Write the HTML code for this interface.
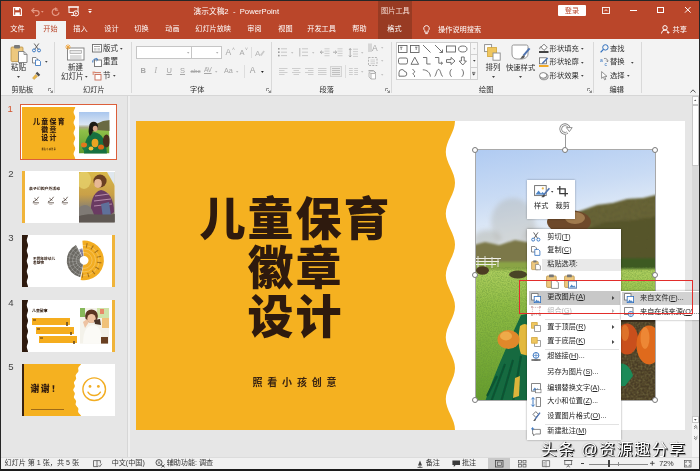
<!DOCTYPE html>
<html lang="zh-CN">
<head>
<meta charset="utf-8">
<title>PowerPoint</title>
<style>
*{box-sizing:border-box;margin:0;padding:0}
html,body{width:700px;height:471px;overflow:hidden;background:#e6e6e6}
body{position:relative;font-family:"Liberation Sans","Noto Sans CJK SC",sans-serif;font-size:8px;color:#262626}
#app{position:absolute;left:0;top:0;width:700px;height:471px;overflow:hidden;will-change:transform}
.abs{position:absolute}
svg{display:block;overflow:visible}
.t{position:absolute;white-space:nowrap}
#frame{position:absolute;left:0;top:0;width:700px;height:471px;border:1px solid #262626;border-bottom:2px solid #1c1c1c;pointer-events:none}
</style>
</head>
<body>
<div id="app">
<div class="abs" style="left:0px;top:0px;width:700px;height:39px;background:#ba462a;"></div>
<div class="abs" style="left:377.5px;top:1px;width:34.5px;height:38px;background:#983b23;"></div>
<svg class="abs" style="left:12.5px;top:6.8px;" width="9" height="9" viewBox="0 0 9 9"><path d="M0.6 0.6H6.8L8.4 2.2V8.4H0.6Z" fill="none" stroke="#fff" stroke-width="1.1"/><rect x="2.2" y="0.6" width="4" height="2.6" fill="#fff"/><rect x="2.2" y="5.4" width="4.6" height="3" fill="#fff"/></svg>
<svg class="abs" style="left:30.5px;top:6.8px;" width="9" height="9" viewBox="0 0 9 9"><path d="M1.2 3.6H5.6A2.5 2.5 0 0 1 5.6 8.6H4" fill="none" stroke="#e49a86" stroke-width="1.2"/><path d="M3.2 1.2L0.8 3.6L3.2 6" fill="none" stroke="#e49a86" stroke-width="1.2"/></svg>
<svg class="abs" style="left:41.2px;top:10.65px;" width="2.6" height="1.8" viewBox="0 0 2.6 1.8"><path d="M0 0H2.6L1.3 1.8Z" fill="#e49a86"/></svg>
<svg class="abs" style="left:51px;top:6.6px;" width="9" height="9.4" viewBox="0 0 9 9.4"><path d="M6.4 2.2A3.4 3.4 0 1 0 8 5.4" fill="none" stroke="#e49a86" stroke-width="1.2"/><path d="M4.6 0.6V3.2H7.2" fill="none" stroke="#e49a86" stroke-width="1.1"/></svg>
<svg class="abs" style="left:67.5px;top:6px;" width="12" height="11" viewBox="0 0 12 11"><path d="M0 1H11" stroke="#fff" stroke-width="1.1"/><rect x="1" y="1" width="9" height="5.4" fill="none" stroke="#fff" stroke-width="1"/><path d="M5.5 6.4V8.6M3.2 9.4H7" stroke="#fff" stroke-width="1"/><circle cx="8" cy="7.4" r="2.6" fill="#ba462a" stroke="#fff" stroke-width="1"/><path d="M7.2 6.2L9.2 7.4L7.2 8.6Z" fill="#fff"/></svg>
<svg class="abs" style="left:87.6px;top:8.6px;" width="4" height="5" viewBox="0 0 4 5"><path d="M0.4 0.5H3.6" stroke="#fff" stroke-width="0.8"/><path d="M0.2 2H3.8L2 4.2Z" fill="#fff"/></svg>
<div class="t" style="left:193.6px;top:6.15px;font-size:7.7px;line-height:11.7px;color:#ffffff;font-weight:400;">演示文稿2&nbsp; -&nbsp; PowerPoint</div>
<div class="t" style="left:381px;top:5.20px;font-size:7.2px;line-height:11.2px;color:#f6ddd5;font-weight:400;">图片工具</div>
<div class="abs" style="left:558.3px;top:5.2px;width:27.5px;height:10.4px;background:#fff;border-radius:1px"></div>
<div class="t" style="left:559px;top:4.70px;font-size:7.2px;line-height:11.2px;color:#ba462a;font-weight:400;width:26px;text-align:center;">登录</div>
<svg class="abs" style="left:602px;top:7px;" width="8" height="7" viewBox="0 0 8 7"><rect x="0.5" y="0.5" width="7" height="6" fill="none" stroke="#fff" stroke-width="0.9"/><path d="M2.5 4.2L4 2.6L5.5 4.2" fill="none" stroke="#fff" stroke-width="0.9"/></svg>
<div class="abs" style="left:630px;top:10px;width:7px;height:1px;background:#fff;"></div>
<div class="abs" style="left:657px;top:7px;width:6.5px;height:6px;background:transparent;border:1px solid #fff"></div>
<svg class="abs" style="left:684.5px;top:7.2px;" width="5.6" height="5.6" viewBox="0 0 5.6 5.6"><path d="M0 0L5.6 5.6M5.6 0L0 5.6" stroke="#fff" stroke-width="1"/></svg>
<div class="abs" style="left:36px;top:21px;width:30px;height:18.5px;background:#f3f3f3;"></div>
<div class="t" style="left:10.3px;top:24.43px;font-size:7.15px;line-height:11.15px;color:#ffffff;font-weight:400;">文件</div>
<div class="t" style="left:73.3px;top:24.43px;font-size:7.15px;line-height:11.15px;color:#ffffff;font-weight:400;">插入</div>
<div class="t" style="left:104.3px;top:24.43px;font-size:7.15px;line-height:11.15px;color:#ffffff;font-weight:400;">设计</div>
<div class="t" style="left:134.3px;top:24.43px;font-size:7.15px;line-height:11.15px;color:#ffffff;font-weight:400;">切换</div>
<div class="t" style="left:165.3px;top:24.43px;font-size:7.15px;line-height:11.15px;color:#ffffff;font-weight:400;">动画</div>
<div class="t" style="left:195.3px;top:24.43px;font-size:7.15px;line-height:11.15px;color:#ffffff;font-weight:400;">幻灯片放映</div>
<div class="t" style="left:247.3px;top:24.43px;font-size:7.15px;line-height:11.15px;color:#ffffff;font-weight:400;">审阅</div>
<div class="t" style="left:278.3px;top:24.43px;font-size:7.15px;line-height:11.15px;color:#ffffff;font-weight:400;">视图</div>
<div class="t" style="left:307.3px;top:24.43px;font-size:7.15px;line-height:11.15px;color:#ffffff;font-weight:400;">开发工具</div>
<div class="t" style="left:352.3px;top:24.43px;font-size:7.15px;line-height:11.15px;color:#ffffff;font-weight:400;">帮助</div>
<div class="t" style="left:387.3px;top:24.43px;font-size:7.15px;line-height:11.15px;color:#ffffff;font-weight:400;">格式</div>
<div class="t" style="left:43.3px;top:24.43px;font-size:7.15px;line-height:11.15px;color:#ba462a;font-weight:400;">开始</div>
<svg class="abs" style="left:422.5px;top:25px;" width="7" height="10" viewBox="0 0 7 10"><path d="M3.5 0.6A2.8 2.8 0 0 1 5.2 5.6V7.2H1.8V5.6A2.8 2.8 0 0 1 3.5 0.6Z" fill="none" stroke="#fff" stroke-width="0.9"/><path d="M2.2 8.6H4.8" stroke="#fff" stroke-width="0.9"/></svg>
<div class="t" style="left:438px;top:24.20px;font-size:7.2px;line-height:11.2px;color:#ffffff;font-weight:400;">操作说明搜索</div>
<svg class="abs" style="left:660.5px;top:25px;" width="9" height="9" viewBox="0 0 9 9"><circle cx="4" cy="2.8" r="2.2" fill="none" stroke="#fff" stroke-width="1"/><path d="M0.5 8.5A3.6 3.6 0 0 1 7 6.5" fill="none" stroke="#fff" stroke-width="1"/><path d="M7.2 6.2V8.8M5.9 7.5H8.5" stroke="#fff" stroke-width="0.8"/></svg>
<div class="t" style="left:672.5px;top:23.90px;font-size:7.2px;line-height:11.2px;color:#ffffff;font-weight:400;">共享</div>
<div class="abs" style="left:0px;top:39px;width:700px;height:56px;background:#f3f3f3;"></div>
<div class="abs" style="left:0px;top:94.5px;width:700px;height:1px;background:#d6d6d6;"></div>
<svg class="abs" style="left:10px;top:43.5px;" width="18" height="19" viewBox="0 0 18 19"><rect x="1" y="3" width="12" height="14.5" rx="1" fill="#edc87e" stroke="#b99247" stroke-width="0.8"/>
<rect x="4" y="1" width="6" height="3.6" rx="1" fill="#7a7a7a"/>
<path d="M8.5 7.5H14L17 10.5V18.5H8.5Z" fill="#fff" stroke="#7c7c7c" stroke-width="0.9"/><path d="M14 7.5V10.5H17" fill="none" stroke="#7c7c7c" stroke-width="0.8"/></svg>
<div class="t" style="left:11px;top:61.85px;font-size:7.5px;line-height:11.5px;color:#2b2b2b;font-weight:400;">粘贴</div>
<svg class="abs" style="left:16.5px;top:75.75px;" width="3" height="2.0" viewBox="0 0 3 2.0"><path d="M0 0H3L1.5 2.0Z" fill="#444"/></svg>
<svg class="abs" style="left:32px;top:43px;" width="9" height="9.5" viewBox="0 0 9 9.5"><path d="M2.2 0.5L6.3 6.4M6.8 0.5L2.7 6.4" stroke="#555" stroke-width="0.9"/><circle cx="2" cy="7.4" r="1.5" fill="none" stroke="#2f6fbd" stroke-width="0.9"/><circle cx="7" cy="7.4" r="1.5" fill="none" stroke="#2f6fbd" stroke-width="0.9"/></svg>
<svg class="abs" style="left:32px;top:57px;" width="9" height="9" viewBox="0 0 9 9"><path d="M0.5 0.5H4L5.5 2V6H0.5Z" fill="#fff" stroke="#6d6d6d" stroke-width="0.8"/><path d="M3.5 3H7L8.5 4.5V8.5H3.5Z" fill="#fff" stroke="#2f6fbd" stroke-width="0.8"/></svg>
<svg class="abs" style="left:44.900000000000006px;top:60.85px;" width="2.6" height="1.8" viewBox="0 0 2.6 1.8"><path d="M0 0H2.6L1.3 1.8Z" fill="#444"/></svg>
<svg class="abs" style="left:32px;top:71px;" width="9" height="9" viewBox="0 0 9 9"><path d="M5.2 0.8L8.2 3.8L6.6 5.4L3.6 2.4Z" fill="#4d4d4d"/><path d="M3.6 3.4L5.6 5.4L2 8.6L0.5 7.1Z" fill="#e8b54a" stroke="#c09030" stroke-width="0.4"/></svg>
<div class="t" style="left:11.5px;top:83.60px;font-size:7.2px;line-height:11.2px;color:#2b2b2b;font-weight:400;">剪贴板</div>
<svg class="abs" style="left:48px;top:88px;" width="5" height="5" viewBox="0 0 5 5"><path d="M0.5 0.5H3M0.5 0.5V3" stroke="#777" stroke-width="0.8" fill="none"/><path d="M2 2L4.5 4.5M4.5 2.5V4.5H2.5" stroke="#777" stroke-width="0.8" fill="none"/></svg>
<div class="abs" style="left:54px;top:42px;width:1px;height:51px;background:#d9d9d9;"></div>
<svg class="abs" style="left:65px;top:43.5px;" width="20" height="17" viewBox="0 0 20 17"><rect x="2.5" y="4" width="16.5" height="12" fill="#fff" stroke="#7c7c7c" stroke-width="0.9"/><rect x="5" y="6.5" width="11.5" height="3" fill="#e8e8e8" stroke="#9a9a9a" stroke-width="0.6"/><path d="M5 12H16.5M5 14H16.5" stroke="#9a9a9a" stroke-width="0.7"/>
<path d="M3 0.2V6M0.2 3H5.8M1 1L5 5M5 1L1 5" stroke="#f0a030" stroke-width="0.8"/></svg>
<div class="t" style="left:68px;top:61.85px;font-size:7.5px;line-height:11.5px;color:#2b2b2b;font-weight:400;">新建</div>
<div class="t" style="left:61px;top:70.85px;font-size:7.5px;line-height:11.5px;color:#2b2b2b;font-weight:400;">幻灯片</div>
<svg class="abs" style="left:85.3px;top:76.35px;" width="2.6" height="1.8" viewBox="0 0 2.6 1.8"><path d="M0 0H2.6L1.3 1.8Z" fill="#444"/></svg>
<svg class="abs" style="left:91.5px;top:44px;" width="10" height="8.5" viewBox="0 0 10 8.5"><rect x="0.5" y="0.5" width="9" height="7.5" fill="#fff" stroke="#6d6d6d" stroke-width="0.9"/><path d="M2 2.5H8" stroke="#8a8a8a" stroke-width="0.8"/><rect x="2" y="4" width="2.6" height="2.6" fill="#cfcfcf"/><rect x="5.4" y="4" width="2.6" height="2.6" fill="#cfcfcf"/></svg>
<div class="t" style="left:103px;top:42.65px;font-size:7.5px;line-height:11.5px;color:#2b2b2b;font-weight:400;">版式</div>
<svg class="abs" style="left:120.0px;top:48.15px;" width="2.6" height="1.8" viewBox="0 0 2.6 1.8"><path d="M0 0H2.6L1.3 1.8Z" fill="#444"/></svg>
<svg class="abs" style="left:91.5px;top:57.5px;" width="10" height="9" viewBox="0 0 10 9"><rect x="2.5" y="2" width="7" height="6.5" fill="#fff" stroke="#6d6d6d" stroke-width="0.9"/><path d="M0.8 4.5A3 3 0 0 1 5.5 1.4" fill="none" stroke="#2f6fbd" stroke-width="1"/><path d="M4.2 0.2L6 1.5L4.4 3" fill="none" stroke="#2f6fbd" stroke-width="0.8"/></svg>
<div class="t" style="left:103px;top:56.05px;font-size:7.5px;line-height:11.5px;color:#2b2b2b;font-weight:400;">重置</div>
<svg class="abs" style="left:91.5px;top:71px;" width="10" height="9.5" viewBox="0 0 10 9.5"><path d="M0.5 1.2H3.2M0.5 3H2.2" stroke="#d0532f" stroke-width="0.9"/><rect x="3" y="3.5" width="6" height="5.5" fill="#fff" stroke="#c96a55" stroke-width="0.9"/><path d="M3 1.6H9" stroke="#c96a55" stroke-width="0.9"/></svg>
<div class="t" style="left:103px;top:69.85px;font-size:7.5px;line-height:11.5px;color:#2b2b2b;font-weight:400;">节</div>
<svg class="abs" style="left:112.9px;top:75.35px;" width="2.6" height="1.8" viewBox="0 0 2.6 1.8"><path d="M0 0H2.6L1.3 1.8Z" fill="#444"/></svg>
<div class="t" style="left:83px;top:83.60px;font-size:7.2px;line-height:11.2px;color:#2b2b2b;font-weight:400;">幻灯片</div>
<div class="abs" style="left:131px;top:42px;width:1px;height:51px;background:#d9d9d9;"></div>
<div class="abs" style="left:136px;top:46px;width:56px;height:13px;background:#fff;border:1px solid #c6c6c6"></div>
<div class="abs" style="left:191px;top:46px;width:31px;height:13px;background:#fff;border:1px solid #c6c6c6"></div>
<svg class="abs" style="left:186.8px;top:52.199999999999996px;" width="2.4" height="1.7" viewBox="0 0 2.4 1.7"><path d="M0 0H2.4L1.2 1.7Z" fill="#b0b0b0"/></svg>
<svg class="abs" style="left:216.10000000000002px;top:52.199999999999996px;" width="2.4" height="1.7" viewBox="0 0 2.4 1.7"><path d="M0 0H2.4L1.2 1.7Z" fill="#b0b0b0"/></svg>
<div class="t" style="left:225.5px;top:46.35px;font-size:8.5px;line-height:12.5px;color:#a6a6a6;font-weight:400;">A</div>
<div class="t" style="left:232px;top:45.30px;font-size:5px;line-height:9px;color:#a6a6a6;font-weight:400;">˄</div>
<div class="t" style="left:239.5px;top:47.25px;font-size:7.5px;line-height:11.5px;color:#a6a6a6;font-weight:400;">A</div>
<div class="t" style="left:245px;top:45.30px;font-size:5px;line-height:9px;color:#a6a6a6;font-weight:400;">˅</div>
<div class="abs" style="left:251px;top:47px;width:1px;height:11px;background:#dddddd;"></div>
<svg class="abs" style="left:255px;top:47.5px;" width="10" height="10" viewBox="0 0 10 10"><text x="0" y="7.5" font-size="8" fill="#b5b5b5" font-family="Liberation Sans">A</text><path d="M5 7L8.5 2.5L9.8 3.6L6.5 8Z" fill="#c9c9c9"/></svg>
<div class="t" style="left:140.5px;top:65.25px;font-size:7.5px;line-height:11.5px;color:#a6a6a6;font-weight:700;">B</div>
<div class="t" style="left:154.5px;top:65.25px;font-size:7.5px;line-height:11.5px;color:#a6a6a6;font-weight:400;font-style:italic;font-family:Liberation Serif,serif;">I</div>
<div class="t" style="left:166.5px;top:65.25px;font-size:7.5px;line-height:11.5px;color:#a6a6a6;font-weight:400;text-decoration:underline;">U</div>
<div class="t" style="left:180px;top:65.25px;font-size:7.5px;line-height:11.5px;color:#a6a6a6;font-weight:400;text-decoration:underline;">S</div>
<div class="t" style="left:190.5px;top:66.20px;font-size:6.2px;line-height:10.2px;color:#a6a6a6;font-weight:400;text-decoration:line-through;">abc</div>
<div class="t" style="left:204px;top:65.05px;font-size:6.5px;line-height:10.5px;color:#a6a6a6;font-weight:400;text-decoration:underline;letter-spacing:-0.3px">AV</div>
<svg class="abs" style="left:215.10000000000002px;top:71.2px;" width="2.4" height="1.7" viewBox="0 0 2.4 1.7"><path d="M0 0H2.4L1.2 1.7Z" fill="#b9b9b9"/></svg>
<div class="t" style="left:224px;top:65.40px;font-size:7.2px;line-height:11.2px;color:#a6a6a6;font-weight:400;">Aa</div>
<svg class="abs" style="left:235.60000000000002px;top:71.2px;" width="2.4" height="1.7" viewBox="0 0 2.4 1.7"><path d="M0 0H2.4L1.2 1.7Z" fill="#b9b9b9"/></svg>
<div class="abs" style="left:243.5px;top:65px;width:1px;height:13px;background:#dddddd;"></div>
<div class="t" style="left:249.8px;top:64.35px;font-size:8.5px;line-height:12.5px;color:#9d9d9d;font-weight:400;">A</div>
<svg class="abs" style="left:261.40000000000003px;top:71.1px;" width="2.8" height="1.9" viewBox="0 0 2.8 1.9"><path d="M0 0H2.8L1.4 1.9Z" fill="#222"/></svg>
<div class="t" style="left:190px;top:83.60px;font-size:7.2px;line-height:11.2px;color:#2b2b2b;font-weight:400;">字体</div>
<svg class="abs" style="left:265.5px;top:88px;" width="5" height="5" viewBox="0 0 5 5"><path d="M0.5 0.5H3M0.5 0.5V3" stroke="#777" stroke-width="0.8" fill="none"/><path d="M2 2L4.5 4.5M4.5 2.5V4.5H2.5" stroke="#777" stroke-width="0.8" fill="none"/></svg>
<div class="abs" style="left:270.5px;top:42px;width:1px;height:51px;background:#d9d9d9;"></div>
<svg class="abs" style="left:278px;top:48px;" width="9" height="8.5" viewBox="0 0 9 8.5"><g fill="#9c9c9c"><rect x="0" y="0" width="1.6" height="1.6"/><rect x="0" y="3.4" width="1.6" height="1.6"/><rect x="0" y="6.8" width="1.6" height="1.6"/></g><path d="M3 0.8H9M3 4.2H9M3 7.6H9" stroke="#bdbdbd" stroke-width="0.8"/></svg>
<svg class="abs" style="left:290.8px;top:52.0px;" width="2.4" height="1.7" viewBox="0 0 2.4 1.7"><path d="M0 0H2.4L1.2 1.7Z" fill="#c2c2c2"/></svg>
<svg class="abs" style="left:299px;top:48px;" width="9" height="8.5" viewBox="0 0 9 8.5"><path d="M0.8 0V8.5" stroke="#a9a9a9" stroke-width="0.8"/><path d="M3 0.8H9M3 4.2H9M3 7.6H9" stroke="#bdbdbd" stroke-width="0.8"/></svg>
<svg class="abs" style="left:311.8px;top:52.0px;" width="2.4" height="1.7" viewBox="0 0 2.4 1.7"><path d="M0 0H2.4L1.2 1.7Z" fill="#c2c2c2"/></svg>
<svg class="abs" style="left:320px;top:48px;" width="9.5" height="8.5" viewBox="0 0 9.5 8.5"><path d="M4.5 0.8H9.5M4.5 3.1H9.5M4.5 5.4H9.5M4.5 7.7H9.5" stroke="#c4c4c4" stroke-width="0.8"/><path d="M0 4.2H3.6M2 2.6L0.3 4.2L2 5.8" stroke="#9c9c9c" stroke-width="0.8" fill="none"/></svg>
<svg class="abs" style="left:333px;top:48px;" width="9.5" height="8.5" viewBox="0 0 9.5 8.5"><path d="M4.5 0.8H9.5M4.5 3.1H9.5M4.5 5.4H9.5M4.5 7.7H9.5" stroke="#c4c4c4" stroke-width="0.8"/><path d="M0 4.2H3.6M2 2.6L3.7 4.2L2 5.8" stroke="#9c9c9c" stroke-width="0.8" fill="none"/></svg>
<svg class="abs" style="left:349px;top:47.5px;" width="9" height="9.5" viewBox="0 0 9 9.5"><path d="M1.2 0.5V9M0 2L1.2 0.5L2.4 2M0 7.5L1.2 9L2.4 7.5" stroke="#9c9c9c" stroke-width="0.8" fill="none"/><path d="M4 1.2H9M4 3.6H9M4 6H9M4 8.4H9" stroke="#c4c4c4" stroke-width="0.8"/></svg>
<svg class="abs" style="left:360.8px;top:52.0px;" width="2.4" height="1.7" viewBox="0 0 2.4 1.7"><path d="M0 0H2.4L1.2 1.7Z" fill="#c2c2c2"/></svg>
<svg class="abs" style="left:368px;top:43px;" width="9.5" height="9.5" viewBox="0 0 9.5 9.5"><path d="M1 0.5V9M3 0.5V9" stroke="#a9a9a9" stroke-width="0.8"/><text x="4" y="8" font-size="8.5" fill="#a3a3a3" font-family="Liberation Sans">A</text></svg>
<svg class="abs" style="left:380.8px;top:47.4px;" width="2.4" height="1.7" viewBox="0 0 2.4 1.7"><path d="M0 0H2.4L1.2 1.7Z" fill="#c2c2c2"/></svg>
<svg class="abs" style="left:368px;top:56.5px;" width="9.5" height="9" viewBox="0 0 9.5 9"><rect x="0.5" y="0.5" width="8.5" height="8" fill="none" stroke="#a3a3a3" stroke-width="0.8" stroke-dasharray="2 1.2"/><path d="M2.5 3H7M2.5 4.8H7M2.5 6.6H7" stroke="#c4c4c4" stroke-width="0.7"/></svg>
<svg class="abs" style="left:380.8px;top:60.4px;" width="2.4" height="1.7" viewBox="0 0 2.4 1.7"><path d="M0 0H2.4L1.2 1.7Z" fill="#c2c2c2"/></svg>
<svg class="abs" style="left:368px;top:70px;" width="10" height="9.5" viewBox="0 0 10 9.5"><path d="M0.5 0.8H5.5L8 3.2" fill="none" stroke="#8c8c8c" stroke-width="1"/><path d="M3 3.5H7.5V9H3Z" fill="#fff" stroke="#a3a3a3" stroke-width="0.8"/><path d="M1 2.5L3 3.5M1 2.5V7L3 9" stroke="#a3a3a3" stroke-width="0.7" fill="none"/></svg>
<svg class="abs" style="left:380.8px;top:74.4px;" width="2.4" height="1.7" viewBox="0 0 2.4 1.7"><path d="M0 0H2.4L1.2 1.7Z" fill="#c2c2c2"/></svg>
<svg class="abs" style="left:278.5px;top:67.5px;" width="8.5" height="7" viewBox="0 0 8.5 7"><path d="M0 0.50H8.50" stroke="#c4c4c4" stroke-width="0.8"/><path d="M0 2.50H5.53" stroke="#c4c4c4" stroke-width="0.8"/><path d="M0 4.50H8.50" stroke="#c4c4c4" stroke-width="0.8"/><path d="M0 6.50H5.53" stroke="#c4c4c4" stroke-width="0.8"/></svg>
<svg class="abs" style="left:291.5px;top:67.5px;" width="8.5" height="7" viewBox="0 0 8.5 7"><path d="M0 0.5H8.5M1.5 2.5H7M0 4.5H8.5M1.5 6.5H7" stroke="#c4c4c4" stroke-width="0.8"/></svg>
<svg class="abs" style="left:304.5px;top:67.5px;" width="8.5" height="7" viewBox="0 0 8.5 7"><path d="M0 0.5H8.5M3 2.5H8.5M0 4.5H8.5M3 6.5H8.5" stroke="#c4c4c4" stroke-width="0.8"/></svg>
<svg class="abs" style="left:318px;top:67.5px;" width="8.5" height="7" viewBox="0 0 8.5 7"><path d="M0 0.50H8.50" stroke="#c4c4c4" stroke-width="0.8"/><path d="M0 2.50H8.50" stroke="#c4c4c4" stroke-width="0.8"/><path d="M0 4.50H8.50" stroke="#c4c4c4" stroke-width="0.8"/><path d="M0 6.50H8.50" stroke="#c4c4c4" stroke-width="0.8"/></svg>
<div class="abs" style="left:329.5px;top:66px;width:12px;height:10.5px;background:#ebebeb;border:1px solid #d4d4d4"></div>
<svg class="abs" style="left:331.5px;top:68px;" width="8" height="7" viewBox="0 0 8 7"><path d="M0 0.5H8M0 2.5H8M0 4.5H8M0 6.5H8" stroke="#b5b5b5" stroke-width="0.8"/></svg>
<div class="abs" style="left:344.5px;top:65px;width:1px;height:13px;background:#dddddd;"></div>
<svg class="abs" style="left:349px;top:67.5px;" width="9" height="7" viewBox="0 0 9 7"><path d="M0 0.5H3.8M0 2.5H3.8M0 4.5H3.8M0 6.5H3.8M5.2 0.5H9M5.2 2.5H9M5.2 4.5H9M5.2 6.5H9" stroke="#c4c4c4" stroke-width="0.8"/></svg>
<svg class="abs" style="left:361.2px;top:71.2px;" width="2.4" height="1.7" viewBox="0 0 2.4 1.7"><path d="M0 0H2.4L1.2 1.7Z" fill="#c2c2c2"/></svg>
<div class="t" style="left:319.5px;top:83.60px;font-size:7.2px;line-height:11.2px;color:#2b2b2b;font-weight:400;">段落</div>
<svg class="abs" style="left:384.5px;top:88px;" width="5" height="5" viewBox="0 0 5 5"><path d="M0.5 0.5H3M0.5 0.5V3" stroke="#777" stroke-width="0.8" fill="none"/><path d="M2 2L4.5 4.5M4.5 2.5V4.5H2.5" stroke="#777" stroke-width="0.8" fill="none"/></svg>
<div class="abs" style="left:390.5px;top:42px;width:1px;height:51px;background:#d9d9d9;"></div>
<div class="abs" style="left:396px;top:42px;width:82px;height:38px;background:#fff;border:1px solid #d0d0d0"></div>
<div class="abs" style="left:469.5px;top:42px;width:8.5px;height:38px;background:#f6f6f6;border:1px solid #d0d0d0"></div>
<div class="abs" style="left:469.5px;top:54.3px;width:8.5px;height:1px;background:#d0d0d0;"></div>
<div class="abs" style="left:469.5px;top:66.6px;width:8.5px;height:1px;background:#d0d0d0;"></div>
<svg class="abs" style="left:472.5px;top:47.75px;" width="2.6" height="1.8" viewBox="0 0 2.6 1.8"><path d="M0 0H2.6L1.3 1.8Z" fill="#c6c6c6"/></svg>
<svg class="abs" style="left:472.5px;top:59.95px;" width="2.6" height="1.8" viewBox="0 0 2.6 1.8"><path d="M0 0H2.6L1.3 1.8Z" fill="#444"/></svg>
<svg class="abs" style="left:472.2px;top:71.5px;" width="3.4" height="4" viewBox="0 0 3.4 4"><path d="M0 0.4H3.4" stroke="#444" stroke-width="0.7"/><path d="M0 1.6H3.4L1.7 3.6Z" fill="#444"/></svg>
<svg class="abs" style="left:398px;top:44px;" width="9.5" height="9.5" viewBox="0 0 9.5 9.5"><g fill="none" stroke="#5a5a5a" stroke-width="0.85"><rect x="0.5" y="1.5" width="8.5" height="7"/><path d="M2 3.2H4.5M3.2 3.2V6" stroke-width="0.7"/></g></svg>
<svg class="abs" style="left:410px;top:44px;" width="9.5" height="9.5" viewBox="0 0 9.5 9.5"><g fill="none" stroke="#5a5a5a" stroke-width="0.85"><rect x="0.5" y="1.5" width="8.5" height="7"/><path d="M5 3.2H7.5M6.2 3.2V6" stroke-width="0.7"/></g></svg>
<svg class="abs" style="left:422px;top:44px;" width="9.5" height="9.5" viewBox="0 0 9.5 9.5"><g fill="none" stroke="#5a5a5a" stroke-width="0.85"><path d="M1 1L8.5 8.5"/></g></svg>
<svg class="abs" style="left:434px;top:44px;" width="9.5" height="9.5" viewBox="0 0 9.5 9.5"><g fill="none" stroke="#5a5a5a" stroke-width="0.85"><path d="M1 1L8.5 8.5M8.5 5.5V8.5H5.5"/></g></svg>
<svg class="abs" style="left:446px;top:44px;" width="9.5" height="9.5" viewBox="0 0 9.5 9.5"><g fill="none" stroke="#5a5a5a" stroke-width="0.85"><rect x="0.5" y="2" width="9" height="6"/></g></svg>
<svg class="abs" style="left:458px;top:44px;" width="9.5" height="9.5" viewBox="0 0 9.5 9.5"><g fill="none" stroke="#5a5a5a" stroke-width="0.85"><ellipse cx="4.8" cy="5" rx="4.2" ry="3"/></g></svg>
<svg class="abs" style="left:398px;top:56px;" width="9.5" height="9.5" viewBox="0 0 9.5 9.5"><g fill="none" stroke="#5a5a5a" stroke-width="0.85"><rect x="0.5" y="2" width="9" height="6" rx="1.6"/></g></svg>
<svg class="abs" style="left:410px;top:56px;" width="9.5" height="9.5" viewBox="0 0 9.5 9.5"><g fill="none" stroke="#5a5a5a" stroke-width="0.85"><path d="M4.8 1.2L8.6 8.3H1Z"/></g></svg>
<svg class="abs" style="left:422px;top:56px;" width="9.5" height="9.5" viewBox="0 0 9.5 9.5"><g fill="none" stroke="#5a5a5a" stroke-width="0.85"><path d="M1 1.5H4.8V8H8.6"/></g></svg>
<svg class="abs" style="left:434px;top:56px;" width="9.5" height="9.5" viewBox="0 0 9.5 9.5"><g fill="none" stroke="#5a5a5a" stroke-width="0.85"><path d="M1 1.5H4.8V7.2H8.4M7 5.8L8.5 7.2L7 8.6"/></g></svg>
<svg class="abs" style="left:446px;top:56px;" width="9.5" height="9.5" viewBox="0 0 9.5 9.5"><g fill="none" stroke="#5a5a5a" stroke-width="0.85"><path d="M0.5 3.6H5V1.4L9 5L5 8.6V6.4H0.5Z"/></g></svg>
<svg class="abs" style="left:458px;top:56px;" width="9.5" height="9.5" viewBox="0 0 9.5 9.5"><g fill="none" stroke="#5a5a5a" stroke-width="0.85"><path d="M3.4 1H6.2V5H8.4L4.8 9L1.2 5H3.4Z"/></g></svg>
<svg class="abs" style="left:398px;top:68px;" width="9.5" height="9.5" viewBox="0 0 9.5 9.5"><g fill="none" stroke="#5a5a5a" stroke-width="0.85"><path d="M1 8.2V4.5A3 3 0 0 1 4 1.5A2.6 2.6 0 0 1 6.4 3.4A2.5 2.5 0 0 1 8.8 6A2.3 2.3 0 0 1 6.5 8.2Z"/></g></svg>
<svg class="abs" style="left:410px;top:68px;" width="9.5" height="9.5" viewBox="0 0 9.5 9.5"><g fill="none" stroke="#5a5a5a" stroke-width="0.85"><path d="M3 1C1.6 2.2 5.8 2.6 4.6 4.2C3.6 5.6 2.2 4.6 3.4 6.4C4.2 7.6 5 7.2 4.4 9"/></g></svg>
<svg class="abs" style="left:422px;top:68px;" width="9.5" height="9.5" viewBox="0 0 9.5 9.5"><g fill="none" stroke="#5a5a5a" stroke-width="0.85"><path d="M0.8 1.8C5 1.8 8.2 4.6 8.4 8.6"/></g></svg>
<svg class="abs" style="left:434px;top:68px;" width="9.5" height="9.5" viewBox="0 0 9.5 9.5"><g fill="none" stroke="#5a5a5a" stroke-width="0.85"><path d="M0.6 8.4C2 8.4 2.4 1.4 4.6 1.4C6.8 1.4 6.8 8.4 9 8.4"/></g></svg>
<svg class="abs" style="left:446px;top:68px;" width="9.5" height="9.5" viewBox="0 0 9.5 9.5"><g fill="none" stroke="#5a5a5a" stroke-width="0.85"><path d="M5.6 1.2C3.4 3 3.4 7 5.6 8.8"/></g></svg>
<svg class="abs" style="left:458px;top:68px;" width="9.5" height="9.5" viewBox="0 0 9.5 9.5"><g fill="none" stroke="#5a5a5a" stroke-width="0.85"><path d="M3.8 1.2C6 3 6 7 3.8 8.8"/></g></svg>
<svg class="abs" style="left:484px;top:44px;" width="17" height="17" viewBox="0 0 17 17"><rect x="0.6" y="0.6" width="7" height="7" fill="#fff" stroke="#8a8a8a" stroke-width="0.9"/><rect x="3.6" y="3.6" width="9" height="9" fill="#efc65f" stroke="#d2a63b" stroke-width="0.8"/><rect x="9" y="9" width="7.2" height="7.2" fill="#fff" stroke="#8a8a8a" stroke-width="0.9"/></svg>
<div class="t" style="left:485.6px;top:61.85px;font-size:7.5px;line-height:11.5px;color:#2b2b2b;font-weight:400;">排列</div>
<svg class="abs" style="left:491.5px;top:75.75px;" width="3" height="2.0" viewBox="0 0 3 2.0"><path d="M0 0H3L1.5 2.0Z" fill="#444"/></svg>
<svg class="abs" style="left:511px;top:43.5px;" width="20" height="18" viewBox="0 0 20 18"><path d="M2.5 1H15.5A1.6 1.6 0 0 1 17 2.6V10C17 13.4 13.4 15 10 15H6C3 15 1 13.2 1 10V2.6A1.6 1.6 0 0 1 2.5 1Z" fill="#fff" stroke="#8a8a8a" stroke-width="0.9"/><path d="M18.6 4.4L12.4 11.6" stroke="#4f73b0" stroke-width="2"/><path d="M12.6 11.2C10.6 11.4 10.8 13.6 9 14.4C11.4 15.2 13.6 14 13.8 12.2Z" fill="#5c5c5c"/></svg>
<div class="t" style="left:506px;top:61.95px;font-size:7.3px;line-height:11.3px;color:#2b2b2b;font-weight:400;">快速样式</div>
<svg class="abs" style="left:519.0px;top:75.75px;" width="3" height="2.0" viewBox="0 0 3 2.0"><path d="M0 0H3L1.5 2.0Z" fill="#444"/></svg>
<svg class="abs" style="left:538.5px;top:43px;" width="9.5" height="10" viewBox="0 0 9.5 10"><path d="M2 4.2L5 1.2L8.2 4.4L5 7.4Z" fill="#fff" stroke="#555" stroke-width="0.8"/><path d="M0.8 6.2C0.2 4.6 1.4 3.6 2.4 3.8" fill="none" stroke="#555" stroke-width="0.7"/><rect x="0" y="8" width="9.5" height="2" fill="#444"/></svg>
<div class="t" style="left:549.6px;top:42.55px;font-size:7.3px;line-height:11.3px;color:#2b2b2b;font-weight:400;">形状填充</div>
<svg class="abs" style="left:580.5px;top:48.15px;" width="2.6" height="1.8" viewBox="0 0 2.6 1.8"><path d="M0 0H2.6L1.3 1.8Z" fill="#444"/></svg>
<svg class="abs" style="left:538.5px;top:56.5px;" width="9.5" height="10" viewBox="0 0 9.5 10"><rect x="0.5" y="0.8" width="7" height="6" fill="#fff" stroke="#6a6a6a" stroke-width="0.8"/><path d="M3.2 5.6L8.2 0.6L9.2 1.6L4.4 6.6L2.8 7Z" fill="#4f73b0"/><rect x="0" y="8" width="9.5" height="2" fill="#f0a92a"/></svg>
<div class="t" style="left:549.6px;top:56.15px;font-size:7.3px;line-height:11.3px;color:#2b2b2b;font-weight:400;">形状轮廓</div>
<svg class="abs" style="left:580.5px;top:61.75px;" width="2.6" height="1.8" viewBox="0 0 2.6 1.8"><path d="M0 0H2.6L1.3 1.8Z" fill="#444"/></svg>
<svg class="abs" style="left:538.5px;top:70.5px;" width="9.5" height="9.5" viewBox="0 0 9.5 9.5"><ellipse cx="5" cy="5.6" rx="4.2" ry="3.2" fill="#c9c9c9" stroke="#7a7a7a" stroke-width="0.7"/><ellipse cx="4.2" cy="4.4" rx="3.6" ry="2.8" fill="#fff" stroke="#6a6a6a" stroke-width="0.8"/></svg>
<div class="t" style="left:549.6px;top:69.75px;font-size:7.3px;line-height:11.3px;color:#2b2b2b;font-weight:400;">形状效果</div>
<svg class="abs" style="left:580.5px;top:75.35px;" width="2.6" height="1.8" viewBox="0 0 2.6 1.8"><path d="M0 0H2.6L1.3 1.8Z" fill="#444"/></svg>
<div class="t" style="left:479px;top:83.60px;font-size:7.2px;line-height:11.2px;color:#2b2b2b;font-weight:400;">绘图</div>
<svg class="abs" style="left:586.5px;top:88px;" width="5" height="5" viewBox="0 0 5 5"><path d="M0.5 0.5H3M0.5 0.5V3" stroke="#777" stroke-width="0.8" fill="none"/><path d="M2 2L4.5 4.5M4.5 2.5V4.5H2.5" stroke="#777" stroke-width="0.8" fill="none"/></svg>
<div class="abs" style="left:592.5px;top:42px;width:1px;height:51px;background:#d9d9d9;"></div>
<svg class="abs" style="left:599.5px;top:43.5px;" width="9" height="9" viewBox="0 0 9 9"><circle cx="5.4" cy="3.4" r="2.7" fill="none" stroke="#2f6fbd" stroke-width="1"/><path d="M3.4 5.4L0.6 8.4" stroke="#2f6fbd" stroke-width="1.2"/></svg>
<div class="t" style="left:610px;top:42.55px;font-size:7.3px;line-height:11.3px;color:#2b2b2b;font-weight:400;">查找</div>
<svg class="abs" style="left:599.5px;top:57px;" width="9.5" height="9.5" viewBox="0 0 9.5 9.5"><text x="0" y="4.6" font-size="5" fill="#2f6fbd" font-family="Liberation Sans">a</text><text x="4.4" y="9" font-size="5" fill="#2f6fbd" font-family="Liberation Sans">c</text><path d="M4 1.5C6.5 1 8 2.5 7.4 4.6M6.2 3.6L7.4 4.8L8.6 3.6" fill="none" stroke="#6a6a6a" stroke-width="0.7"/></svg>
<div class="t" style="left:610px;top:56.15px;font-size:7.3px;line-height:11.3px;color:#2b2b2b;font-weight:400;">替换</div>
<svg class="abs" style="left:630.5px;top:61.75px;" width="2.6" height="1.8" viewBox="0 0 2.6 1.8"><path d="M0 0H2.6L1.3 1.8Z" fill="#444"/></svg>
<svg class="abs" style="left:601px;top:70.5px;" width="7" height="9.5" viewBox="0 0 7 9.5"><path d="M0.6 0.6V7.4L2.4 5.8L3.6 8.8L4.8 8.3L3.6 5.4H6Z" fill="#fff" stroke="#6a6a6a" stroke-width="0.7"/></svg>
<div class="t" style="left:610px;top:69.75px;font-size:7.3px;line-height:11.3px;color:#2b2b2b;font-weight:400;">选择</div>
<svg class="abs" style="left:626.7px;top:75.35px;" width="2.6" height="1.8" viewBox="0 0 2.6 1.8"><path d="M0 0H2.6L1.3 1.8Z" fill="#444"/></svg>
<div class="t" style="left:609.5px;top:83.60px;font-size:7.2px;line-height:11.2px;color:#2b2b2b;font-weight:400;">编辑</div>
<div class="abs" style="left:640.5px;top:42px;width:1px;height:51px;background:#d9d9d9;"></div>
<svg class="abs" style="left:689.5px;top:88.5px;" width="6" height="4" viewBox="0 0 6 4"><path d="M0.5 3.5L3 0.8L5.5 3.5" fill="none" stroke="#444" stroke-width="0.9"/></svg>
<div class="abs" style="left:0px;top:95.5px;width:127px;height:362px;background:#e6e6e6;"></div>
<div class="abs" style="left:127px;top:95.5px;width:1px;height:362px;background:#d6d6d6;"></div>
<div class="abs" style="left:128px;top:95.5px;width:1.5px;height:362px;background:#efefef;"></div>
<div class="t" style="left:7.5px;top:102.30px;font-size:9.6px;line-height:13.6px;color:#d2532c;font-weight:400;">1</div>
<div class="t" style="left:8.3px;top:167.00px;font-size:9.6px;line-height:13.6px;color:#444;font-weight:400;">2</div>
<div class="t" style="left:8.3px;top:231.30px;font-size:9.6px;line-height:13.6px;color:#444;font-weight:400;">3</div>
<div class="t" style="left:8.3px;top:295.50px;font-size:9.6px;line-height:13.6px;color:#444;font-weight:400;">4</div>
<div class="t" style="left:8.3px;top:359.80px;font-size:9.6px;line-height:13.6px;color:#444;font-weight:400;">5</div>
<div class="abs" style="left:20.2px;top:104.3px;width:96.6px;height:56px;background:#fff;border:1.6px solid #dc5f3a"></div>
<div class="abs" style="left:22.4px;top:106.5px;width:92.4px;height:52px;background:#fff;"></div>
<svg class="abs" style="left:22.4px;top:106.5px;" width="92.4" height="52" viewBox="0 0 92.4 52"><path d="M0 0L53.20 0.00L53.14 0.65L52.97 1.30L52.71 1.95L52.40 2.60L52.09 3.25L51.83 3.90L51.66 4.55L51.60 5.20L51.66 5.85L51.83 6.50L52.09 7.15L52.40 7.80L52.71 8.45L52.97 9.10L53.14 9.75L53.20 10.40L53.14 11.05L52.97 11.70L52.71 12.35L52.40 13.00L52.09 13.65L51.83 14.30L51.66 14.95L51.60 15.60L51.66 16.25L51.83 16.90L52.09 17.55L52.40 18.20L52.71 18.85L52.97 19.50L53.14 20.15L53.20 20.80L53.14 21.45L52.97 22.10L52.71 22.75L52.40 23.40L52.09 24.05L51.83 24.70L51.66 25.35L51.60 26.00L51.66 26.65L51.83 27.30L52.09 27.95L52.40 28.60L52.71 29.25L52.97 29.90L53.14 30.55L53.20 31.20L53.14 31.85L52.97 32.50L52.71 33.15L52.40 33.80L52.09 34.45L51.83 35.10L51.66 35.75L51.60 36.40L51.66 37.05L51.83 37.70L52.09 38.35L52.40 39.00L52.71 39.65L52.97 40.30L53.14 40.95L53.20 41.60L53.14 42.25L52.97 42.90L52.71 43.55L52.40 44.20L52.09 44.85L51.83 45.50L51.66 46.15L51.60 46.80L51.66 47.45L51.83 48.10L52.09 48.75L52.40 49.40L52.71 50.05L52.97 50.70L53.14 51.35L53.20 52.00L0 52Z" fill="#f5b120"/></svg>
<div class="t" style="left:22.4px;top:117.25px;font-size:6.9px;line-height:10.9px;color:#2e1a0e;font-weight:900;width:53px;text-align:center;letter-spacing:1.4px;text-indent:1.4px;">儿童保育</div>
<div class="t" style="left:22.4px;top:125.30px;font-size:6.9px;line-height:10.9px;color:#2e1a0e;font-weight:900;width:53px;text-align:center;letter-spacing:1.4px;text-indent:1.4px;">徽章</div>
<div class="t" style="left:22.4px;top:133.35px;font-size:6.9px;line-height:10.9px;color:#2e1a0e;font-weight:900;width:53px;text-align:center;letter-spacing:1.4px;text-indent:1.4px;">设计</div>
<div class="t" style="left:22.4px;top:147.20px;font-size:1.8px;line-height:5.8px;color:#2e1a0e;font-weight:700;width:53px;text-align:center;letter-spacing:0.6px;">照看小孩创意</div>
<svg class="abs" style="left:79px;top:112.0px;" width="30.5" height="41.5" viewBox="0 0 30.5 41.5"><defs><linearGradient id="p1" x1="0" y1="0" x2="0" y2="1"><stop offset="0" stop-color="#a9c6ee"/><stop offset="0.3" stop-color="#dbe6f3"/><stop offset="0.37" stop-color="#a9aa84"/><stop offset="0.45" stop-color="#8fc048"/><stop offset="1" stop-color="#5d9a2c"/></linearGradient><clipPath id="c1"><rect width="30.5" height="41.5"/></clipPath><filter id="tb" x="-5%" y="-5%" width="110%" height="110%"><feGaussianBlur stdDeviation="0.55"/></filter></defs>
<g clip-path="url(#c1)"><rect width="30.5" height="41.5" fill="url(#p1)"/><g filter="url(#tb)">
<path d="M17 12L24 9L31 8V19L17 18Z" fill="#6b6a42"/>
<path d="M5 42C5 30 8 22 15 20C23 21 27 28 28 42Z" fill="#157040"/>
<path d="M8 30L3 36L6 40L11 34Z" fill="#1a7a46"/>
<ellipse cx="14.6" cy="14.5" rx="4.4" ry="4.8" fill="#1e1a16"/><ellipse cx="16.2" cy="16.6" rx="2.4" ry="2.8" fill="#d9a88a"/>
<path d="M10.5 14C9 18 9.5 22 11 24L14 20Z" fill="#1e1a16"/>
<ellipse cx="16" cy="31" rx="3.4" ry="4.2" fill="#eaa424"/><ellipse cx="5" cy="33" rx="3" ry="2.4" fill="#e2781c"/><ellipse cx="27.5" cy="29" rx="3.6" ry="6.4" fill="#4a2e1c"/><ellipse cx="22" cy="35" rx="3" ry="2.6" fill="#de6a18"/><ellipse cx="12" cy="36.5" rx="2.4" ry="2" fill="#f0c040"/></g></g></svg>
<div class="abs" style="left:22.4px;top:171px;width:92.4px;height:52px;background:#fff;"></div>
<div class="abs" style="left:22.4px;top:171px;width:2.4px;height:52px;background:#f0b43a;"></div>
<div class="t" style="left:29px;top:184.85px;font-size:3.9px;line-height:7.9px;color:#2e1a0e;font-weight:700;">亲子们的户外活动</div>
<svg class="abs" style="left:32px;top:195.5px;" width="8" height="9" viewBox="0 0 8 9"><path d="M1 5.6C3 5.4 5 3.6 6.6 0.8M2.4 2.2L5.4 4.4M0.8 6.8H7" stroke="#3a2a20" stroke-width="0.7" fill="none"/><path d="M2.2 8.4H5.4" stroke="#8a7a70" stroke-width="0.5"/></svg>
<svg class="abs" style="left:46.5px;top:195.5px;" width="8" height="9" viewBox="0 0 8 9"><path d="M1 5.6C3 5.4 5 3.6 6.6 0.8M2.4 2.2L5.4 4.4M0.8 6.8H7" stroke="#3a2a20" stroke-width="0.7" fill="none"/><path d="M2.2 8.4H5.4" stroke="#8a7a70" stroke-width="0.5"/></svg>
<svg class="abs" style="left:61px;top:195.5px;" width="8" height="9" viewBox="0 0 8 9"><path d="M1 5.6C3 5.4 5 3.6 6.6 0.8M2.4 2.2L5.4 4.4M0.8 6.8H7" stroke="#3a2a20" stroke-width="0.7" fill="none"/><path d="M2.2 8.4H5.4" stroke="#8a7a70" stroke-width="0.5"/></svg>
<svg class="abs" style="left:79px;top:171.6px;" width="35.8" height="50.6" viewBox="0 0 35.8 50.6"><defs><linearGradient id="p2" x1="0" y1="0" x2="0" y2="1"><stop offset="0" stop-color="#d9b94a"/><stop offset="0.45" stop-color="#c9a048"/><stop offset="0.7" stop-color="#8c826e"/><stop offset="1" stop-color="#6d675e"/></linearGradient><clipPath id="c2"><rect width="35.8" height="50.6"/></clipPath></defs>
<g clip-path="url(#c2)"><rect width="35.8" height="50.6" fill="url(#p2)"/><g filter="url(#tb)">
<ellipse cx="5" cy="8" rx="7" ry="9" fill="#e6cf6a" opacity="0.8"/><path d="M28 0H36V14Z" fill="#dfe7ee"/>
<path d="M12 44C11 30 14 20 22 18C30 19 35 28 35 40L30 44Z" fill="#6a3a62"/><path d="M16 24L30 22M15 29L32 27M15 34L33 32" stroke="#b58aa8" stroke-width="1.2"/>
<ellipse cx="21" cy="9" rx="6.6" ry="6.4" fill="#6b3f22"/><ellipse cx="19" cy="11.5" rx="3.8" ry="4.4" fill="#e7b894"/>
<path d="M22 32L30 30L32 44L24 46Z" fill="#5f6f9a"/>
<path d="M0 36C6 30 12 34 14 40L18 51H0Z" fill="#7f7a74"/><path d="M0 44C10 40 24 44 36 42V51H0Z" fill="#5e5952"/></g></g></svg>
<div class="abs" style="left:22.4px;top:235.3px;width:92.4px;height:52px;background:#fff;"></div>
<svg class="abs" style="left:22.4px;top:235.3px;" width="92.4" height="52" viewBox="0 0 92.4 52"><path d="M0 0L6.00 0.00L5.95 0.65L5.82 1.30L5.63 1.95L5.40 2.60L5.17 3.25L4.98 3.90L4.85 4.55L4.80 5.20L4.85 5.85L4.98 6.50L5.17 7.15L5.40 7.80L5.63 8.45L5.82 9.10L5.95 9.75L6.00 10.40L5.95 11.05L5.82 11.70L5.63 12.35L5.40 13.00L5.17 13.65L4.98 14.30L4.85 14.95L4.80 15.60L4.85 16.25L4.98 16.90L5.17 17.55L5.40 18.20L5.63 18.85L5.82 19.50L5.95 20.15L6.00 20.80L5.95 21.45L5.82 22.10L5.63 22.75L5.40 23.40L5.17 24.05L4.98 24.70L4.85 25.35L4.80 26.00L4.85 26.65L4.98 27.30L5.17 27.95L5.40 28.60L5.63 29.25L5.82 29.90L5.95 30.55L6.00 31.20L5.95 31.85L5.82 32.50L5.63 33.15L5.40 33.80L5.17 34.45L4.98 35.10L4.85 35.75L4.80 36.40L4.85 37.05L4.98 37.70L5.17 38.35L5.40 39.00L5.63 39.65L5.82 40.30L5.95 40.95L6.00 41.60L5.95 42.25L5.82 42.90L5.63 43.55L5.40 44.20L5.17 44.85L4.98 45.50L4.85 46.15L4.80 46.80L4.85 47.45L4.98 48.10L5.17 48.75L5.40 49.40L5.63 50.05L5.82 50.70L5.95 51.35L6.00 52.00L0 52Z" fill="#2e1a0e"/></svg>
<div class="abs" style="left:112.4px;top:235.3px;width:2.4px;height:52px;background:#f0b43a;"></div>
<div class="t" style="left:33px;top:255.85px;font-size:3.7px;line-height:7.7px;color:#2e1a0e;font-weight:700;">不同年龄幼儿</div>
<div class="t" style="left:33px;top:260.45px;font-size:3.7px;line-height:7.7px;color:#2e1a0e;font-weight:700;">着想物</div>
<svg class="abs" style="left:22.4px;top:235.3px;" width="92.4" height="52" viewBox="0 0 92.4 52"><path d="M60.37 5.68A19.8 19.8 0 1 1 58.66 44.90L61.34 29.73A4.4 4.4 0 1 0 61.72 21.02Z" fill="#f2ad22"/><path d="M58.19 42.35A17.4 17.4 0 0 1 53.93 10.04L60.03 21.52A4.4 4.4 0 0 0 61.11 29.69Z" fill="#6a6862"/><path d="M57.22 14.44A12 12 0 0 1 60.43 13.52L61.49 21.04A4.4 4.4 0 0 0 60.31 21.38Z" fill="#7d7a9a"/><circle cx="62.1" cy="25.4" r="8" fill="none" stroke="#fff" stroke-width="0.35" opacity="0.7"/><circle cx="62.1" cy="25.4" r="11.5" fill="none" stroke="#fff" stroke-width="0.35" opacity="0.7"/><circle cx="62.1" cy="25.4" r="15" fill="none" stroke="#fff" stroke-width="0.35" opacity="0.7"/><path d="M64.36 12.60L65.14 8.17" stroke="#8a5a14" stroke-width="1.1" opacity="0.7"/><path d="M68.99 14.38L71.37 10.56" stroke="#8a5a14" stroke-width="1.1" opacity="0.7"/><path d="M72.62 17.76L76.26 15.11" stroke="#8a5a14" stroke-width="1.1" opacity="0.7"/><path d="M74.71 22.26L79.08 21.17" stroke="#8a5a14" stroke-width="1.1" opacity="0.7"/><path d="M74.97 27.21L79.43 27.84" stroke="#8a5a14" stroke-width="1.1" opacity="0.7"/><path d="M73.36 31.90L77.26 34.15" stroke="#8a5a14" stroke-width="1.1" opacity="0.7"/><path d="M70.10 35.64L72.87 39.19" stroke="#8a5a14" stroke-width="1.1" opacity="0.7"/><path d="M65.68 37.90L66.92 42.22" stroke="#8a5a14" stroke-width="1.1" opacity="0.7"/><path d="M60.74 38.33L60.27 42.80" stroke="#8a5a14" stroke-width="1.1" opacity="0.7"/><path d="M60.60 29.53L56.15 41.75" stroke="#fff" stroke-width="0.3" opacity="0.6"/><path d="M59.51 28.96L51.87 39.48" stroke="#fff" stroke-width="0.3" opacity="0.6"/><path d="M58.63 28.11L48.39 36.11" stroke="#fff" stroke-width="0.3" opacity="0.6"/><path d="M58.02 27.05L45.97 31.92" stroke="#fff" stroke-width="0.3" opacity="0.6"/><path d="M57.72 25.86L44.80 27.22" stroke="#fff" stroke-width="0.3" opacity="0.6"/><path d="M57.77 24.64L44.96 22.38" stroke="#fff" stroke-width="0.3" opacity="0.6"/><path d="M58.15 23.47L46.46 17.77" stroke="#fff" stroke-width="0.3" opacity="0.6"/><path d="M58.83 22.46L49.17 13.76" stroke="#fff" stroke-width="0.3" opacity="0.6"/><path d="M59.77 21.67L52.88 10.64" stroke="#fff" stroke-width="0.3" opacity="0.6"/></svg>
<div class="abs" style="left:22.4px;top:299.5px;width:92.4px;height:52px;background:#fff;"></div>
<svg class="abs" style="left:22.4px;top:299.5px;" width="92.4" height="52" viewBox="0 0 92.4 52"><path d="M0 0L6.00 0.00L5.95 0.65L5.82 1.30L5.63 1.95L5.40 2.60L5.17 3.25L4.98 3.90L4.85 4.55L4.80 5.20L4.85 5.85L4.98 6.50L5.17 7.15L5.40 7.80L5.63 8.45L5.82 9.10L5.95 9.75L6.00 10.40L5.95 11.05L5.82 11.70L5.63 12.35L5.40 13.00L5.17 13.65L4.98 14.30L4.85 14.95L4.80 15.60L4.85 16.25L4.98 16.90L5.17 17.55L5.40 18.20L5.63 18.85L5.82 19.50L5.95 20.15L6.00 20.80L5.95 21.45L5.82 22.10L5.63 22.75L5.40 23.40L5.17 24.05L4.98 24.70L4.85 25.35L4.80 26.00L4.85 26.65L4.98 27.30L5.17 27.95L5.40 28.60L5.63 29.25L5.82 29.90L5.95 30.55L6.00 31.20L5.95 31.85L5.82 32.50L5.63 33.15L5.40 33.80L5.17 34.45L4.98 35.10L4.85 35.75L4.80 36.40L4.85 37.05L4.98 37.70L5.17 38.35L5.40 39.00L5.63 39.65L5.82 40.30L5.95 40.95L6.00 41.60L5.95 42.25L5.82 42.90L5.63 43.55L5.40 44.20L5.17 44.85L4.98 45.50L4.85 46.15L4.80 46.80L4.85 47.45L4.98 48.10L5.17 48.75L5.40 49.40L5.63 50.05L5.82 50.70L5.95 51.35L6.00 52.00L0 52Z" fill="#2e1a0e"/></svg>
<div class="abs" style="left:112.4px;top:299.5px;width:2.4px;height:52px;background:#f0b43a;"></div>
<div class="t" style="left:32px;top:306.95px;font-size:3.9px;line-height:7.9px;color:#2e1a0e;font-weight:700;">儿童徽章</div>
<div class="abs" style="left:32px;top:317.7px;width:38px;height:7.4px;background:#f5ad1e;"></div>
<div class="abs" style="left:33px;top:318.9px;width:3.4px;height:2.2px;background:#8a5a14;opacity:.75"></div>
<div class="abs" style="left:65.6px;top:322.3px;width:2.4px;height:3.6px;background:#6a4a1a;opacity:.8"></div>
<div class="abs" style="left:35.7px;top:327.1px;width:38.3px;height:7.4px;background:#f5ad1e;"></div>
<div class="abs" style="left:36.7px;top:328.3px;width:3.4px;height:2.2px;background:#8a5a14;opacity:.75"></div>
<div class="abs" style="left:69.6px;top:331.70000000000005px;width:2.4px;height:3.6px;background:#6a4a1a;opacity:.8"></div>
<div class="abs" style="left:39px;top:336.1px;width:38px;height:7.4px;background:#f5ad1e;"></div>
<div class="abs" style="left:40px;top:337.3px;width:3.4px;height:2.2px;background:#8a5a14;opacity:.75"></div>
<div class="abs" style="left:72.6px;top:340.70000000000005px;width:2.4px;height:3.6px;background:#6a4a1a;opacity:.8"></div>
<svg class="abs" style="left:80px;top:307.8px;" width="29.2" height="35.8" viewBox="0 0 29.2 35.8"><defs><clipPath id="c4"><rect width="29.2" height="35.8"/></clipPath></defs><g clip-path="url(#c4)"><rect width="29.2" height="35.8" fill="#f4f2ea"/><g filter="url(#tb)">
<rect x="0" y="0" width="5" height="9" fill="#86b85a"/><rect x="17" y="0" width="12.2" height="10" fill="#cfe3a8"/><rect x="22" y="10" width="7.2" height="10" fill="#f0c27a"/><rect x="20" y="1" width="4" height="5" fill="#e78a6a"/>
<path d="M3 36C3 24 6 18 13 17C20 18 22 24 22 36Z" fill="#fbfaf6"/>
<ellipse cx="11.5" cy="8" rx="6.4" ry="6.6" fill="#5a3520"/><ellipse cx="11.5" cy="10.5" rx="4.2" ry="4.6" fill="#eec3a2"/>
<path d="M3 14L7 11L9 14L5 20Z" fill="#eec3a2"/><path d="M14 12L20 11L21 17L15 16Z" fill="#4a3328"/><rect x="21" y="29" width="7" height="6.8" fill="#6a3f22"/></g></g></svg>
<div class="abs" style="left:22.4px;top:363.8px;width:92.4px;height:52px;background:#fff;"></div>
<svg class="abs" style="left:22.4px;top:363.8px;" width="92.4" height="52" viewBox="0 0 92.4 52"><path d="M0 0L59.10 0.00L58.74 0.65L58.21 1.30L57.59 1.95L56.98 2.60L56.50 3.25L56.22 3.90L56.14 4.55L56.22 5.20L56.36 5.85L56.46 6.50L56.40 7.15L56.15 7.80L55.71 8.45L55.14 9.10L54.56 9.75L54.06 10.40L53.74 11.05L53.63 11.70L53.71 12.35L53.90 13.00L54.09 13.65L54.17 14.30L54.07 14.95L53.77 15.60L53.31 16.25L52.80 16.90L52.33 17.55L52.02 18.20L51.92 18.85L52.02 19.50L52.28 20.15L52.57 20.80L52.80 21.45L52.87 22.10L52.75 22.75L52.45 23.40L52.04 24.05L51.65 24.70L51.38 25.35L51.30 26.00L51.44 26.65L51.76 27.30L52.16 27.95L52.54 28.60L52.79 29.25L52.85 29.90L52.72 30.55L52.46 31.20L52.16 31.85L51.94 32.50L51.89 33.15L52.06 33.80L52.42 34.45L52.91 35.10L53.42 35.75L53.83 36.40L54.07 37.05L54.11 37.70L53.99 38.35L53.79 39.00L53.62 39.65L53.58 40.30L53.75 40.95L54.13 41.60L54.67 42.25L55.26 42.90L55.80 43.55L56.18 44.20L56.37 44.85L56.37 45.50L56.24 46.15L56.11 46.80L56.07 47.45L56.21 48.10L56.56 48.75L57.08 49.40L57.71 50.05L58.31 50.70L58.80 51.35L59.09 52.00L0 52Z" fill="#f5b120"/></svg>
<div class="abs" style="left:22.4px;top:363.8px;width:1.5px;height:52px;background:#3a2210;"></div>
<div class="t" style="left:30.4px;top:383.40px;font-size:8.8px;line-height:12.8px;color:#2e1a0e;font-weight:900;letter-spacing:1.6px;">谢谢！</div>
<div class="abs" style="left:30.6px;top:409.1px;width:33px;height:0.9px;background:#8a5a14;opacity:.8"></div>
<svg class="abs" style="left:82.2px;top:377.40000000000003px;" width="24.4" height="24.4" viewBox="0 0 24.4 24.4"><circle cx="12.2" cy="12.2" r="11.3" fill="none" stroke="#f2ad22" stroke-width="1.4"/><circle cx="8" cy="9.4" r="1.4" fill="#f2ad22"/><circle cx="16.4" cy="9.4" r="1.4" fill="#f2ad22"/><path d="M6 15.2C8.4 19.6 16 19.6 18.4 15.2" fill="none" stroke="#f2ad22" stroke-width="1.4" stroke-linecap="round"/></svg>
<div class="abs" style="left:129.5px;top:95.5px;width:570.5px;height:362px;background:#e6e6e6;"></div>
<div class="abs" style="left:136px;top:120.5px;width:548.6px;height:309px;background:#fff;"></div>
<svg class="abs" style="left:136px;top:120.5px;" width="548.6" height="309" viewBox="0 0 548.6 309"><path d="M0 0L319.00 0.00L318.65 3.86L317.65 7.72L316.16 11.59L314.40 15.45L312.64 19.31L311.15 23.18L310.15 27.04L309.80 30.90L310.15 34.76L311.15 38.62L312.64 42.49L314.40 46.35L316.16 50.21L317.65 54.08L318.65 57.94L319.00 61.80L318.65 65.66L317.65 69.53L316.16 73.39L314.40 77.25L312.64 81.11L311.15 84.97L310.15 88.84L309.80 92.70L310.15 96.56L311.15 100.42L312.64 104.29L314.40 108.15L316.16 112.01L317.65 115.88L318.65 119.74L319.00 123.60L318.65 127.46L317.65 131.32L316.16 135.19L314.40 139.05L312.64 142.91L311.15 146.78L310.15 150.64L309.80 154.50L310.15 158.36L311.15 162.22L312.64 166.09L314.40 169.95L316.16 173.81L317.65 177.68L318.65 181.54L319.00 185.40L318.65 189.26L317.65 193.12L316.16 196.99L314.40 200.85L312.64 204.71L311.15 208.57L310.15 212.44L309.80 216.30L310.15 220.16L311.15 224.03L312.64 227.89L314.40 231.75L316.16 235.61L317.65 239.47L318.65 243.34L319.00 247.20L318.65 251.06L317.65 254.93L316.16 258.79L314.40 262.65L312.64 266.51L311.15 270.38L310.15 274.24L309.80 278.10L310.15 281.96L311.15 285.82L312.64 289.69L314.40 293.55L316.16 297.41L317.65 301.27L318.65 305.14L319.00 309.00L0 309Z" fill="#f5b120"/></svg>
<div class="t" style="left:194.4px;top:193.80px;font-size:46px;line-height:50px;color:#2e1a0e;font-weight:900;width:200px;text-align:center;letter-spacing:2px;text-indent:2px;">儿童保育</div>
<div class="t" style="left:194.4px;top:242.80px;font-size:46px;line-height:50px;color:#2e1a0e;font-weight:900;width:200px;text-align:center;letter-spacing:2px;text-indent:2px;">徽章</div>
<div class="t" style="left:194.4px;top:291.80px;font-size:46px;line-height:50px;color:#2e1a0e;font-weight:900;width:200px;text-align:center;letter-spacing:2px;text-indent:2px;">设计</div>
<div class="t" style="left:194.5px;top:376.00px;font-size:10px;line-height:14px;color:#3a2412;font-weight:700;width:200px;text-align:center;letter-spacing:4.8px;text-indent:4.8px;">照看小孩创意</div>
<div class="abs" style="left:691.5px;top:96px;width:7.5px;height:361px;background:#dadada;"></div>
<div class="abs" style="left:691.5px;top:96px;width:7.5px;height:9px;background:#fff;border:1px solid #c8c8c8"></div>
<div class="abs" style="left:693.7px;top:99.4px;width:3px;height:2px;background:#555;clip-path:polygon(50% 0,100% 100%,0 100%)"></div>
<div class="abs" style="left:691.5px;top:105px;width:7.5px;height:61px;background:#fff;border:1px solid #c8c8c8"></div>
<div class="abs" style="left:691.5px;top:416px;width:7.5px;height:41px;background:#f4f4f4;"></div>
<div class="abs" style="left:691.5px;top:416px;width:7.5px;height:7px;background:#fff;border:1px solid #c8c8c8"></div>
<svg class="abs" style="left:693.9000000000001px;top:418.95000000000005px;" width="2.6" height="1.8" viewBox="0 0 2.6 1.8"><path d="M0 0H2.6L1.3 1.8Z" fill="#555"/></svg>
<svg class="abs" style="left:693.6px;top:425.4px;" width="3.4" height="4" viewBox="0 0 3.4 4"><path d="M0 2L1.7 0.4L3.4 2M0 3.8L1.7 2.2L3.4 3.8" fill="none" stroke="#555" stroke-width="0.7"/></svg>
<svg class="abs" style="left:693.6px;top:436.4px;" width="3.4" height="4" viewBox="0 0 3.4 4"><path d="M0 0.2L1.7 1.8L3.4 0.2M0 2L1.7 3.6L3.4 2" fill="none" stroke="#555" stroke-width="0.7"/></svg>
<svg class="abs" style="left:475px;top:149.5px;" width="180" height="250.5" viewBox="0 0 180 250.5"><defs>
<linearGradient id="sky" x1="0" y1="0" x2="0.25" y2="1"><stop offset="0" stop-color="#b0cbf2"/><stop offset="0.4" stop-color="#c9dbf4"/><stop offset="0.7" stop-color="#e3ecf7"/><stop offset="1" stop-color="#f4f6f9"/></linearGradient>
<linearGradient id="grass" x1="0" y1="0" x2="0" y2="1"><stop offset="0" stop-color="#b2d162"/><stop offset="0.3" stop-color="#8fbc44"/><stop offset="1" stop-color="#649c2c"/></linearGradient>
<filter id="b1" x="-10%" y="-10%" width="120%" height="120%"><feGaussianBlur stdDeviation="1.2"/></filter>
<filter id="b2" x="-10%" y="-10%" width="120%" height="120%"><feGaussianBlur stdDeviation="0.7"/></filter>
<filter id="b3" x="-20%" y="-20%" width="140%" height="140%"><feGaussianBlur stdDeviation="2.5"/></filter>
<filter id="noise" x="0" y="0" width="100%" height="100%"><feTurbulence type="fractalNoise" baseFrequency="0.8" numOctaves="2" seed="3"/><feColorMatrix values="0 0 0 0 0.12  0 0 0 0 0.28  0 0 0 0 0.04  0 0 0 1.4 -0.5"/><feComposite in2="SourceGraphic" operator="in"/></filter>
<filter id="noise2" x="0" y="0" width="100%" height="100%"><feTurbulence type="fractalNoise" baseFrequency="0.5" numOctaves="3" seed="8"/><feColorMatrix values="0 0 0 0 0.2  0 0 0 0 0.18  0 0 0 0 0.06  0 0 0 1.6 -0.55"/><feComposite in2="SourceGraphic" operator="in"/></filter>
<clipPath id="pc"><rect width="180" height="250.5"/></clipPath></defs>
<g clip-path="url(#pc)">
<rect width="180" height="120" fill="url(#sky)"/>
<rect y="116" width="180" height="136" fill="url(#grass)"/>
<g filter="url(#b3)"><ellipse cx="38" cy="72" rx="22" ry="24" fill="#a39e92" opacity="0.3"/><ellipse cx="12" cy="90" rx="14" ry="10" fill="#8e8a78" opacity="0.3"/><ellipse cx="60" cy="88" rx="12" ry="12" fill="#9a958a" opacity="0.22"/></g>
<g filter="url(#b1)">
<path d="M-5 96L10 92L24 95L40 90L58 93L80 90L96 80V120H-5Z" fill="#7c7848"/>
<path d="M84 74L96 64L108 60L122 55L138 53L152 49L168 48L185 44V112H84Z" fill="#5f5c30"/>
<path d="M84 74L96 64L108 60L122 55L138 53L152 49L168 48L185 44V112H84Z" fill="#fff" filter="url(#noise2)" opacity="0.9"/>
<path d="M100 84L130 72L160 70L185 66V110H100Z" fill="#4c4c26" opacity="0.6"/>
<path d="M140 108H185V119H140Z" fill="#3e5a24"/>
<path d="M-5 112H100V120H-5Z" fill="#8aa444"/>
</g>
<rect y="117" width="180" height="135" fill="#fff" filter="url(#noise)" opacity="0.7"/>
<g filter="url(#b2)">
<path d="M0 108.5H26M0 111.5H24M0 114.5H21" stroke="#f1f1ea" stroke-width="1.2"/>
<path d="M3 106V118M10 106V118M17 107V118M23 108V117" stroke="#e2e2da" stroke-width="1"/>
<ellipse cx="7.5" cy="120.5" rx="6.5" ry="4.2" fill="#4e3e24"/>
<ellipse cx="43" cy="124.5" rx="9" ry="4" fill="#4a4426"/>
<ellipse cx="94" cy="72" rx="22" ry="12" fill="#6e4a2a"/><ellipse cx="100" cy="68" rx="10" ry="6" fill="#a07a4e"/>
<path d="M144 158H185V252H144Z" fill="#4a3c26"/>
<path d="M144 158H185V252H144Z" fill="#fff" filter="url(#noise2)" opacity="0.8"/>
<path d="M144 150H185V172H144Z" fill="#3a2e1c"/>
<ellipse cx="152" cy="189" rx="11" ry="15.5" fill="#c9501a"/><ellipse cx="150" cy="183" rx="4" ry="8" fill="#e47a30" opacity="0.8"/>
<ellipse cx="174" cy="195" rx="12.5" ry="19.5" fill="#df6a1c"/><ellipse cx="170" cy="188" rx="4.5" ry="11" fill="#f08e3c" opacity="0.8"/>
<path d="M144 214C150 212 156 218 158 226L150 236H144Z" fill="#1a8a58"/>
<path d="M46 165L58 163L58 252L10 252C16 232 30 200 46 165Z" fill="#126a40"/>
<path d="M16 252L30 214M26 252L38 210M38 252L46 206M12 246L22 226" stroke="#0c5230" stroke-width="2"/>
<path d="M45 176C50 172 54 174 55 180L54 206L46 204C43 196 43 186 45 176Z" fill="#e3b93c"/>
<path d="M40 228L45 226L44 246L38 248Z" fill="#dcb43a"/>
<ellipse cx="33.5" cy="189.5" rx="11" ry="9.5" fill="#e0882a"/><ellipse cx="31" cy="186" rx="6" ry="4.4" fill="#f0b050" opacity="0.85"/>
</g></g></svg>
<div class="abs" style="left:474.5px;top:149.0px;width:181px;height:251.5px;background:transparent;border:1px solid #a9a9a9"></div>
<div class="abs" style="left:564.6px;top:134.5px;width:1px;height:13px;background:#9a9a9a;"></div>
<svg class="abs" style="left:559.2px;top:122.8px;" width="13" height="12" viewBox="0 0 13 12"><path d="M8.47 9.52A4.3 4.3 0 1 1 10.15 4.89" fill="none" stroke="#7a7a7a" stroke-width="2.7"/><path d="M8.47 9.52A4.3 4.3 0 1 1 10.15 4.89" fill="none" stroke="#fff" stroke-width="1.1"/><path d="M7.4 4.6H13.2L10.4 8.6Z" fill="#fff" stroke="#7a7a7a" stroke-width="0.8" stroke-linejoin="round"/></svg>
<div class="abs" style="left:472px;top:146.5px;width:6px;height:6px;border-radius:50%;background:#fff;border:1px solid #7a7a7a"></div>
<div class="abs" style="left:472px;top:271.75px;width:6px;height:6px;border-radius:50%;background:#fff;border:1px solid #7a7a7a"></div>
<div class="abs" style="left:472px;top:397.0px;width:6px;height:6px;border-radius:50%;background:#fff;border:1px solid #7a7a7a"></div>
<div class="abs" style="left:562.0px;top:146.5px;width:6px;height:6px;border-radius:50%;background:#fff;border:1px solid #7a7a7a"></div>
<div class="abs" style="left:562.0px;top:397.0px;width:6px;height:6px;border-radius:50%;background:#fff;border:1px solid #7a7a7a"></div>
<div class="abs" style="left:652px;top:146.5px;width:6px;height:6px;border-radius:50%;background:#fff;border:1px solid #7a7a7a"></div>
<div class="abs" style="left:652px;top:271.75px;width:6px;height:6px;border-radius:50%;background:#fff;border:1px solid #7a7a7a"></div>
<div class="abs" style="left:652px;top:397.0px;width:6px;height:6px;border-radius:50%;background:#fff;border:1px solid #7a7a7a"></div>
<div class="abs" style="left:527px;top:179.5px;width:48px;height:39.5px;background:#fff;box-shadow:0 0 2px rgba(0,0,0,.35)"></div>
<svg class="abs" style="left:534px;top:185px;" width="18" height="13.5" viewBox="0 0 18 13.5"><rect x="0.6" y="0.6" width="11.6" height="10" fill="#fff" stroke="#6a6a6a" stroke-width="0.9"/><path d="M1.4 9.6L4.6 5.6L7 8.4L8.6 7L11.4 9.8Z" fill="#4f86c6"/><circle cx="8.8" cy="3.4" r="1.1" fill="#e8b54a"/><path d="M15.4 3.2L9.8 9.8" stroke="#4f73b0" stroke-width="1.6"/><path d="M10 9.4C8.6 9.6 8.6 11.4 7.2 12C9 12.8 10.8 12 11 10.4Z" fill="#4a4a4a"/></svg>
<svg class="abs" style="left:551.0px;top:191.20000000000002px;" width="2.4" height="1.7" viewBox="0 0 2.4 1.7"><path d="M0 0H2.4L1.2 1.7Z" fill="#444"/></svg>
<svg class="abs" style="left:557px;top:186px;" width="11" height="10.5" viewBox="0 0 11 10.5"><path d="M2.8 0V7.6H11M0 2.8H8.2V10.5" fill="none" stroke="#3a3a3a" stroke-width="1.3"/></svg>
<div class="t" style="left:534px;top:201.23px;font-size:7.15px;line-height:11.15px;color:#262626;font-weight:400;">样式</div>
<div class="t" style="left:555.5px;top:201.23px;font-size:7.15px;line-height:11.15px;color:#262626;font-weight:400;">裁剪</div>
<div class="abs" style="left:527px;top:229px;width:94px;height:210.5px;background:#fff;box-shadow:0 0 2px rgba(0,0,0,.4)"></div>
<div class="abs" style="left:542px;top:259.3px;width:78.5px;height:11.6px;background:#e9e9e9;"></div>
<div class="abs" style="left:528.5px;top:291px;width:91.5px;height:14px;background:#c8c8c8;"></div>
<div class="t" style="left:547.3px;top:231.62px;font-size:7.15px;line-height:11.15px;color:#262626;font-weight:400;">剪切(<u>T</u>)</div>
<div class="t" style="left:547.3px;top:245.23px;font-size:7.15px;line-height:11.15px;color:#262626;font-weight:400;">复制(<u>C</u>)</div>
<div class="t" style="left:547.3px;top:259.43px;font-size:7.15px;line-height:11.15px;color:#262626;font-weight:400;">粘贴选项:</div>
<div class="t" style="left:547.3px;top:292.03px;font-size:7.15px;line-height:11.15px;color:#262626;font-weight:400;">更改图片(<u>A</u>)</div>
<div class="t" style="left:547.3px;top:321.82px;font-size:7.15px;line-height:11.15px;color:#262626;font-weight:400;">置于顶层(<u>R</u>)</div>
<div class="t" style="left:547.3px;top:336.23px;font-size:7.15px;line-height:11.15px;color:#262626;font-weight:400;">置于底层(<u>K</u>)</div>
<div class="t" style="left:547.3px;top:351.43px;font-size:7.15px;line-height:11.15px;color:#262626;font-weight:400;">超链接(<u>H</u>)...</div>
<div class="t" style="left:547.3px;top:367.03px;font-size:7.15px;line-height:11.15px;color:#262626;font-weight:400;">另存为图片(<u>S</u>)...</div>
<div class="t" style="left:547.3px;top:382.82px;font-size:7.15px;line-height:11.15px;color:#262626;font-weight:400;">编辑替换文字(<u>A</u>)...</div>
<div class="t" style="left:547.3px;top:396.43px;font-size:7.15px;line-height:11.15px;color:#262626;font-weight:400;">大小和位置(<u>Z</u>)...</div>
<div class="t" style="left:547.3px;top:410.62px;font-size:7.15px;line-height:11.15px;color:#262626;font-weight:400;">设置图片格式(<u>O</u>)...</div>
<div class="t" style="left:547.3px;top:426.43px;font-size:7.15px;line-height:11.15px;color:#262626;font-weight:400;">新建批注(<u>M</u>)</div>
<div class="t" style="left:547.3px;top:305.82px;font-size:7.15px;line-height:11.15px;color:#b4b4b4;font-weight:400;">组合(<u>G</u>)</div>
<div class="abs" style="left:545px;top:319.3px;width:74px;height:1px;background:#e2e2e2;"></div>
<div class="abs" style="left:545px;top:349.3px;width:74px;height:1px;background:#e2e2e2;"></div>
<div class="abs" style="left:545px;top:424.3px;width:74px;height:1px;background:#e2e2e2;"></div>
<svg class="abs" style="left:611.5px;top:295.6px;" width="2.4" height="4" viewBox="0 0 2.4 4"><path d="M0 0L2.4 2L0 4Z" fill="#444"/></svg>
<svg class="abs" style="left:611.5px;top:309.4px;" width="2.4" height="4" viewBox="0 0 2.4 4"><path d="M0 0L2.4 2L0 4Z" fill="#b4b4b4"/></svg>
<svg class="abs" style="left:611.5px;top:325.4px;" width="2.4" height="4" viewBox="0 0 2.4 4"><path d="M0 0L2.4 2L0 4Z" fill="#444"/></svg>
<svg class="abs" style="left:611.5px;top:339.8px;" width="2.4" height="4" viewBox="0 0 2.4 4"><path d="M0 0L2.4 2L0 4Z" fill="#444"/></svg>
<svg class="abs" style="left:531px;top:232.0px;" width="10" height="10" viewBox="0 0 10 10"><path d="M2.6 0.4L6.6 6.4M7 0.4L3 6.4" stroke="#555" stroke-width="0.9"/><circle cx="2.2" cy="7.6" r="1.5" fill="none" stroke="#2f6fbd" stroke-width="0.9"/><circle cx="7.4" cy="7.6" r="1.5" fill="none" stroke="#2f6fbd" stroke-width="0.9"/></svg>
<svg class="abs" style="left:531px;top:245.8px;" width="10" height="10" viewBox="0 0 10 10"><path d="M0.5 0.5H4L5.5 2V6H0.5Z" fill="#fff" stroke="#6d6d6d" stroke-width="0.8"/><path d="M3.8 3.4H7.4L8.9 4.9V9.4H3.8Z" fill="#fff" stroke="#2f6fbd" stroke-width="0.8"/></svg>
<svg class="abs" style="left:531px;top:260.0px;" width="10" height="10" viewBox="0 0 10 10"><rect x="0.6" y="1.6" width="6.6" height="8" rx="0.6" fill="#edc87e" stroke="#b99247" stroke-width="0.7"/><rect x="2.3" y="0.4" width="3.2" height="2" fill="#777"/><path d="M4.6 4.4H7.8L9.4 6V9.8H4.6Z" fill="#fff" stroke="#777" stroke-width="0.7"/></svg>
<svg class="abs" style="left:546px;top:274px;" width="13" height="15" viewBox="0 0 13 15"><rect x="0.6" y="2" width="9.6" height="11.4" rx="0.8" fill="#edc87e" stroke="#b99247" stroke-width="0.8"/><rect x="3" y="0.5" width="4.8" height="2.8" rx="0.6" fill="#777"/><path d="M5.4 6.4H10L12.4 8.8V14.4H5.4Z" fill="#fff" stroke="#777" stroke-width="0.8"/></svg>
<svg class="abs" style="left:564px;top:274px;" width="13" height="15" viewBox="0 0 13 15"><rect x="0.6" y="2" width="9.6" height="11.4" rx="0.8" fill="#edc87e" stroke="#b99247" stroke-width="0.8"/><rect x="3" y="0.5" width="4.8" height="2.8" rx="0.6" fill="#777"/><rect x="4.6" y="7" width="8" height="7.2" fill="#fff" stroke="#4a6fa8" stroke-width="0.8"/><path d="M5.4 13.4L7.6 10.6L9.2 12.2L10.2 11.4L12 13.4Z" fill="#4f86c6"/></svg>
<svg class="abs" style="left:531px;top:292.6px;" width="10" height="10" viewBox="0 0 10 10"><rect x="0.6" y="0.6" width="6.4" height="6.4" fill="#fff" stroke="#6a6a6a" stroke-width="0.8"/><rect x="3.2" y="3.4" width="6.4" height="6.2" fill="#fff" stroke="#2f6fbd" stroke-width="0.8"/><path d="M3.8 9L5.6 6.6L6.8 8L7.6 7.4L9 9Z" fill="#4f86c6"/></svg>
<svg class="abs" style="left:531px;top:306.4px;" width="10" height="10" viewBox="0 0 10 10"><rect x="1.4" y="1.4" width="7.2" height="7.2" fill="none" stroke="#c9a0a0" stroke-width="0.7" stroke-dasharray="1.4 1"/><g fill="#d9b9b9"><rect x="0" y="0" width="2" height="2"/><rect x="8" y="0" width="2" height="2"/><rect x="0" y="8" width="2" height="2"/><rect x="8" y="8" width="2" height="2"/></g></svg>
<svg class="abs" style="left:531px;top:322.4px;" width="10" height="10" viewBox="0 0 10 10"><rect x="0.6" y="0.6" width="5.6" height="5.6" fill="#efc65f" stroke="#d2a63b" stroke-width="0.8"/><rect x="3.6" y="3.6" width="5.8" height="5.8" fill="#fff" stroke="#8a8a8a" stroke-width="0.8"/></svg>
<svg class="abs" style="left:531px;top:336.8px;" width="10" height="10" viewBox="0 0 10 10"><rect x="3.6" y="3.6" width="5.8" height="5.8" fill="#fff" stroke="#8a8a8a" stroke-width="0.8"/><rect x="0.6" y="0.6" width="5.6" height="5.6" fill="#efc65f" stroke="#d2a63b" stroke-width="0.8"/></svg>
<svg class="abs" style="left:531px;top:352.0px;" width="10" height="10" viewBox="0 0 10 10"><circle cx="5" cy="3.4" r="2.9" fill="none" stroke="#2f6fbd" stroke-width="0.9"/><path d="M2.2 3.4H7.8M5 0.5V6.3" stroke="#2f6fbd" stroke-width="0.6"/><path d="M1 8H4.4M5.6 8H9" stroke="#555" stroke-width="1.6" stroke-linecap="round"/><path d="M3.4 8H6.6" stroke="#555" stroke-width="0.8"/></svg>
<svg class="abs" style="left:531px;top:383.4px;" width="10" height="10" viewBox="0 0 10 10"><rect x="0.6" y="0.6" width="8.8" height="7.6" fill="#fff" stroke="#6a6a6a" stroke-width="0.8"/><path d="M1.4 7.4L3.8 4.4L5.4 6.2L6.6 5.2L8.6 7.4Z" fill="#4f86c6"/><rect x="4.6" y="6.4" width="5.4" height="3.4" fill="#fff" stroke="#6a6a6a" stroke-width="0.6"/></svg>
<svg class="abs" style="left:531px;top:397.0px;" width="10" height="10" viewBox="0 0 10 10"><rect x="5.2" y="0.6" width="4.2" height="8.8" fill="#fff" stroke="#6a6a6a" stroke-width="0.8"/><path d="M2 0.6V9.4M0.4 2.4L2 0.6L3.6 2.4M0.4 7.6L2 9.4L3.6 7.6" fill="none" stroke="#2f6fbd" stroke-width="0.9"/></svg>
<svg class="abs" style="left:531px;top:411.2px;" width="10" height="10" viewBox="0 0 10 10"><path d="M2 3.4L4.8 0.6L7.8 3.6L4.8 6.4Z" fill="#fff" stroke="#555" stroke-width="0.8"/><path d="M9 1.6L4 8.4" stroke="#4f73b0" stroke-width="1.4"/><path d="M4.2 8C3 8.2 3.2 9.4 2 9.8C3.6 10.4 5 9.8 5 8.6Z" fill="#4a4a4a"/></svg>
<svg class="abs" style="left:531px;top:427.0px;" width="10" height="10" viewBox="0 0 10 10"><path d="M1.6 2.4H9.4V7H4.4L2.6 8.8V7H1.6Z" fill="#fff" stroke="#6a6a6a" stroke-width="0.8"/><path d="M1.6 0.2V3.4M0 1.8H3.2" stroke="#2f6fbd" stroke-width="0.8"/></svg>
<div class="abs" style="left:620.7px;top:290.8px;width:80px;height:29px;background:#fff;box-shadow:0 0 2px rgba(0,0,0,.4)"></div>
<div class="abs" style="left:621.5px;top:291.5px;width:78.5px;height:13.6px;background:#d2d2d2;"></div>
<svg class="abs" style="left:623.5px;top:292.6px;" width="10" height="10" viewBox="0 0 10 10"><rect x="0.6" y="0.6" width="6.4" height="6.4" fill="#fff" stroke="#6a6a6a" stroke-width="0.8"/><rect x="3.2" y="3.4" width="6.4" height="6.2" fill="#fff" stroke="#2f6fbd" stroke-width="0.8"/><path d="M3.8 9L5.6 6.6L6.8 8L7.6 7.4L9 9Z" fill="#4f86c6"/></svg>
<div class="t" style="left:640px;top:292.73px;font-size:7.15px;line-height:11.15px;color:#262626;font-weight:400;">来自文件(<u>F</u>)...</div>
<svg class="abs" style="left:623.5px;top:307px;" width="10" height="10" viewBox="0 0 10 10"><rect x="0.6" y="0.6" width="8.4" height="7" fill="#fff" stroke="#6a6a6a" stroke-width="0.8"/><circle cx="6.8" cy="7" r="2.6" fill="#fff" stroke="#2f6fbd" stroke-width="0.8"/><path d="M4.2 7H9.4M6.8 4.4V9.6" stroke="#2f6fbd" stroke-width="0.5"/></svg>
<div class="t" style="left:640px;top:307.03px;font-size:7.15px;line-height:11.15px;color:#262626;font-weight:400;">来自在线来源(<u>O</u>)...</div>
<div class="abs" style="left:518.6px;top:280px;width:174.8px;height:34.4px;background:transparent;border:1.8px solid #e22d2b"></div>
<div class="t" style="left:540.4px;top:438.60px;font-size:16.4px;line-height:20.4px;color:#fff;font-weight:400;letter-spacing:1.1px;text-shadow:1px 1px 0.4px rgba(10,10,10,.95),1.5px 1.5px 1px rgba(0,0,0,.45),0 0 1px rgba(30,30,30,.6);">头条 @资源趣分享</div>
<div class="abs" style="left:0px;top:457.2px;width:700px;height:13px;background:#f1f1f1;"></div>
<div class="abs" style="left:0px;top:457px;width:700px;height:0.6px;background:#dcdcdc;"></div>
<div class="t" style="left:4.5px;top:458.05px;font-size:7.1px;line-height:11.1px;color:#333;font-weight:400;">幻灯片 第 1 张，共 5 张</div>
<svg class="abs" style="left:93px;top:459.6px;" width="9" height="8" viewBox="0 0 9 8"><path d="M0.5 0.6H4V6.6H0.5Z" fill="none" stroke="#555" stroke-width="0.8"/><path d="M4 0.6H7.4V3.4M4 6.6H5.4" fill="none" stroke="#555" stroke-width="0.8"/><path d="M5.8 5.2L6.8 6.6L8.8 3.8" fill="none" stroke="#555" stroke-width="0.8"/></svg>
<div class="t" style="left:111.7px;top:458.05px;font-size:7.1px;line-height:11.1px;color:#333;font-weight:400;">中文(中国)</div>
<svg class="abs" style="left:155px;top:459.4px;" width="10" height="8.5" viewBox="0 0 10 8.5"><circle cx="4" cy="3.6" r="3" fill="none" stroke="#444" stroke-width="0.9"/><path d="M3 2.4L5 4.8M5 2.4L3 4.8" stroke="#444" stroke-width="0.7"/><path d="M5.6 5.4L9.6 8.2M9.6 5.6L6.4 8.4" stroke="#444" stroke-width="0.9"/></svg>
<div class="t" style="left:166.7px;top:458.05px;font-size:7.1px;line-height:11.1px;color:#333;font-weight:400;">辅助功能: 调查</div>
<svg class="abs" style="left:416.5px;top:459.6px;" width="6" height="8" viewBox="0 0 6 8"><path d="M0.5 7.4H5.5M3 5.6V7.4" stroke="#444" stroke-width="0.8"/><path d="M3 0.4L5 5.4H1Z" fill="#444"/></svg>
<div class="t" style="left:425.7px;top:458.05px;font-size:7.1px;line-height:11.1px;color:#333;font-weight:400;">备注</div>
<svg class="abs" style="left:452px;top:460px;" width="8.5" height="7.5" viewBox="0 0 8.5 7.5"><path d="M0.4 0.4H8V5H3.6L1.8 7V5H0.4Z" fill="#3a3a3a"/></svg>
<div class="t" style="left:462px;top:458.05px;font-size:7.1px;line-height:11.1px;color:#333;font-weight:400;">批注</div>
<div class="abs" style="left:488px;top:457.6px;width:21.5px;height:12px;background:#c9c9c9;"></div>
<svg class="abs" style="left:494.5px;top:460px;" width="8.5" height="7.5" viewBox="0 0 8.5 7.5"><rect x="0.5" y="0.5" width="7.5" height="6.5" fill="none" stroke="#444" stroke-width="0.8"/><rect x="2.6" y="2" width="4" height="3.4" fill="none" stroke="#444" stroke-width="0.6"/></svg>
<svg class="abs" style="left:518px;top:460px;" width="8.5" height="7.5" viewBox="0 0 8.5 7.5"><g fill="none" stroke="#555" stroke-width="0.7"><rect x="0.4" y="0.4" width="3" height="2.6"/><rect x="5" y="0.4" width="3" height="2.6"/><rect x="0.4" y="4.4" width="3" height="2.6"/><rect x="5" y="4.4" width="3" height="2.6"/></g></svg>
<svg class="abs" style="left:541.5px;top:460px;" width="8" height="7.5" viewBox="0 0 8 7.5"><path d="M0.4 0.6H3.6L4 1.2L4.4 0.6H7.6V6.6H4.4L4 7.2L3.6 6.6H0.4Z" fill="none" stroke="#555" stroke-width="0.7"/><path d="M4 1.2V7" stroke="#555" stroke-width="0.6"/><path d="M1.2 2.4H3M1.2 3.8H3M1.2 5.2H3" stroke="#777" stroke-width="0.5"/></svg>
<svg class="abs" style="left:563.5px;top:460px;" width="8.5" height="7.5" viewBox="0 0 8.5 7.5"><path d="M0 0.5H8.5" stroke="#555" stroke-width="0.8"/><rect x="0.8" y="0.5" width="6.9" height="4.2" fill="none" stroke="#555" stroke-width="0.7"/><path d="M4.25 4.7V6.2M2.4 7.2L4.25 6L6.1 7.2" stroke="#555" stroke-width="0.7" fill="none"/></svg>
<div class="abs" style="left:580.5px;top:463.4px;width:3.4px;height:0.9px;background:#444;"></div>
<div class="abs" style="left:589px;top:463.5px;width:58.5px;height:0.7px;background:#8a8a8a;"></div>
<div class="abs" style="left:617.8px;top:461.6px;width:0.7px;height:4.4px;background:#8a8a8a;"></div>
<div class="abs" style="left:607.6px;top:460.2px;width:2.2px;height:7.2px;background:#444;"></div>
<svg class="abs" style="left:649.8px;top:461.4px;" width="4.6" height="4.6" viewBox="0 0 4.6 4.6"><path d="M0 2.3H4.6M2.3 0V4.6" stroke="#444" stroke-width="0.9"/></svg>
<div class="t" style="left:659.3px;top:458.00px;font-size:7.2px;line-height:11.2px;color:#333;font-weight:400;">72%</div>
<svg class="abs" style="left:683.6px;top:460px;" width="7.5" height="7.5" viewBox="0 0 7.5 7.5"><rect x="0.5" y="0.5" width="6.5" height="6.5" fill="none" stroke="#555" stroke-width="0.7"/><path d="M1.8 3V1.8H3M4.6 1.8H5.8V3M5.8 4.6V5.8H4.6M3 5.8H1.8V4.6" fill="none" stroke="#555" stroke-width="0.7"/></svg>
<div id="frame"></div>
</div>
</body>
</html>
